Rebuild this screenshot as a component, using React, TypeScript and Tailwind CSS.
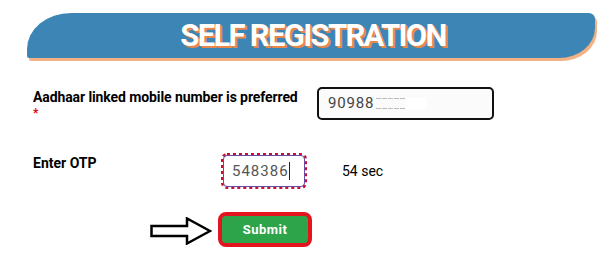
import React from "react";

export default function App() {
  return (
    <div className="w-[615px] h-[267px] bg-white overflow-hidden relative" style={{ fontFamily: "Roboto, 'Liberation Sans', sans-serif" }}>
      {/* Banner */}
      <div className="pt-[13px] pl-[27px]">
        <div className="relative w-[568px] h-[45px]">
          <div className="absolute left-[2px] top-[3px] w-[568px] h-[45px] bg-[#f4b183] rounded-tl-[44px_36px] rounded-tr-[6px] rounded-br-[36px_30px] rounded-bl-[2px]" />
          <div className="absolute inset-0 bg-[#3d85b4] rounded-tl-[44px_36px] rounded-tr-[6px] rounded-br-[36px_30px] rounded-bl-[2px] flex items-center justify-center">
            <span
              className="text-white font-bold text-[31px] leading-none tracking-[-1.7px] pl-[4px]"
              style={{ textShadow: "2px 2px 0 #e8874a, 1px 1px 0 #e8874a" }}
            >
              SELF REGISTRATION
            </span>
          </div>
        </div>
      </div>

      {/* Row 1 */}
      <div className="flex items-start mt-[30px] pl-[33px]">
        <div className="w-[284px] pt-[1px]">
          <div className="text-[14px] font-bold text-black leading-[16px] tracking-[-0.1px]">
            Aadhaar linked mobile number is preferred
          </div>
          <div className="text-[#e00] text-[12px] leading-[10px] font-bold mt-[3px]">*</div>
        </div>
        <div className="w-[177px] h-[33px] border-2 border-[#111] rounded-[5px] bg-[#fbfbfb] flex items-center pl-[9px] -mt-[1px]">
          <span className="text-[15px] text-[#444] tracking-[0.8px]">90988</span>
          <span className="flex items-center gap-[1px] ml-[2px]">
            <span className="w-[5px] h-[11px] border-y border-dashed border-[#bbb]" />
            <span className="w-[5px] h-[11px] border-y border-dashed border-[#bbb]" />
            <span className="w-[5px] h-[11px] border-y border-dashed border-[#bbb]" />
            <span className="w-[5px] h-[11px] border-y border-dashed border-[#bbb]" />
            <span className="w-[5px] h-[11px] border-y border-dashed border-[#bbb]" />
            <span className="w-[20px] h-[11px] bg-white" />
          </span>
        </div>
      </div>

      {/* Row 2 */}
      <div className="flex items-start mt-[33px] pl-[33px]">
        <div className="w-[188px] text-[14px] font-bold text-black leading-[16px] pt-[2px]">Enter OTP</div>
        <div className="w-[86px] h-[36px] rounded-[6px] border-[3px] border-dotted border-[#c8102e] outline outline-1 outline-[#6a4ca8] -outline-offset-[3px] bg-white flex items-center pl-[8px]">
          <span className="text-[15px] text-[#555] tracking-[1px]">548386</span>
          <span className="w-[1px] h-[18px] bg-[#222]" />
        </div>
        <div className="ml-[35px] mt-[8px] text-[14px] text-black">54 sec</div>
      </div>

      {/* Row 3 */}
      <div className="flex items-center mt-[23px] pl-[150px]">
        <svg width="62" height="28" viewBox="0 0 62 28" className="mr-[6px] mt-[2px]">
          <path d="M1.5 9 H37 V1.5 L60 14 L37 26.5 V19 H1.5 Z" fill="white" stroke="#000" strokeWidth="2.5" strokeLinejoin="miter" />
        </svg>
        <div className="w-[94px] h-[35px] rounded-[8px] border-[4px] border-[#e3141f] bg-[#2ea44a] flex items-center justify-center">
          <span className="text-white font-bold text-[13px] tracking-[0.5px]">Submit</span>
        </div>
      </div>
    </div>
  );
}
